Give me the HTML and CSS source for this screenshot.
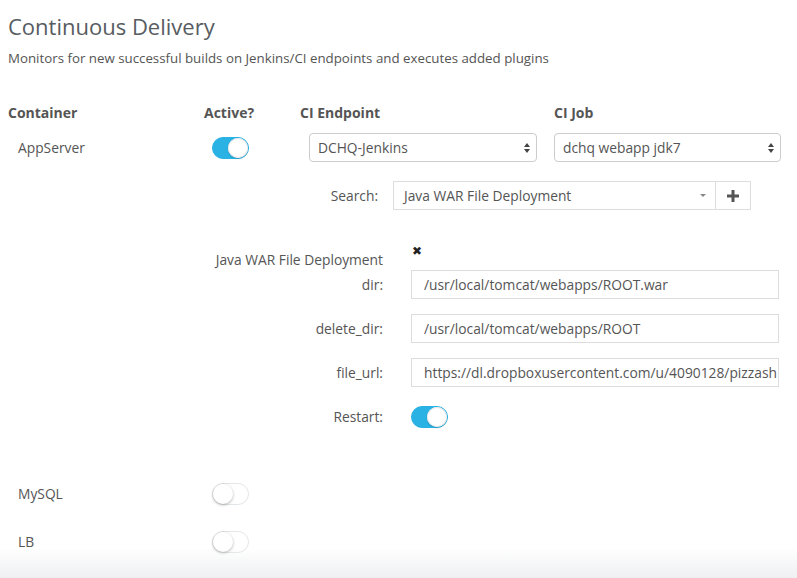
FILE: index.html
```html
<!DOCTYPE html>
<html lang="en">
<head>
    <meta charset="UTF-8">
    <meta name="viewport" content="width=device-width, initial-scale=1.0">
    <title>Continuous Delivery</title>
    <link rel="stylesheet" href="styles.css">
</head>
<body>
    <div class="page">

        <h1 class="title">Continuous Delivery</h1>
        <p class="subtitle">Monitors for new successful builds on Jenkins/CI endpoints and executes added plugins</p>

        <div class="grid headRow">
            <div class="head">Container</div>
            <div class="head">Active?</div>
            <div class="head">CI Endpoint</div>
            <div class="head">CI Job</div>
        </div>

        <div class="grid row">
            <div class="name">AppServer</div>
            <div class="activeCell"><span class="toggle on"></span></div>
            <div class="selectCell">
                <div class="select first">DCHQ-Jenkins<span class="updown"></span></div>
            </div>
            <div class="selectCell">
                <div class="select">dchq webapp jdk7<span class="updown"></span></div>
            </div>
        </div>

        <div class="searchRow">
            <div class="searchLabel">Search:</div>
            <div class="searchGroup">
                <div class="searchBox">Java WAR File Deployment<span class="caret"></span></div>
                <div class="addBtn">
                    <svg width="12" height="12" viewBox="0 0 12 12"><path d="M4.5 0h3v4.5H12v3H7.5V12h-3V7.5H0v-3h4.5z" fill="#555"/></svg>
                </div>
            </div>
        </div>

        <div class="plugin">
            <div class="field pluginHead">
                <div class="label pluginName">Java WAR File Deployment</div>
                <div class="remove">✖</div>
            </div>
            <div class="field">
                <div class="label">dir:</div>
                <div class="input">/usr/local/tomcat/webapps/ROOT.war</div>
            </div>
            <div class="field">
                <div class="label">delete_dir:</div>
                <div class="input">/usr/local/tomcat/webapps/ROOT</div>
            </div>
            <div class="field">
                <div class="label">file_url:</div>
                <div class="input"><span class="clip">https://dl.dropboxusercontent.com/u/4090128/pizzash</span></div>
            </div>
            <div class="field">
                <div class="label">Restart:</div>
                <div class="toggleCell"><span class="toggle on"></span></div>
            </div>
        </div>

        <div class="grid row mysql">
            <div class="name">MySQL</div>
            <div class="activeCell"><span class="toggle"></span></div>
        </div>

        <div class="grid row lb">
            <div class="name">LB</div>
            <div class="activeCell"><span class="toggle"></span></div>
        </div>

    </div>

    <div class="fade"></div>
</body>
</html>
```

FILE: styles.css
```css
* {
    box-sizing: border-box;
}

body {
    margin: 0;
    background-color: #fff;
    font-family: 'Open Sans', 'Liberation Sans', sans-serif;
    color: #555;
    font-size: 13.8px;
}

.page {
    padding: 0 8px;
}

.title {
    margin: 0;
    padding-top: 10px;
    font-size: 22px;
    line-height: 32px;
    font-weight: 400;
    color: #575c62;
}

.subtitle {
    margin: 6px 0 0;
    line-height: 20px;
    font-size: 13.3px;
}

.grid {
    display: grid;
    grid-template-columns: 196px 96px 254px 1fr;
    align-items: center;
}

.headRow {
    margin-top: 35px;
    line-height: 20px;
}

.head {
    font-weight: 700;
    font-size: 14px;
}

.row {
    margin-top: 10px;
    height: 29px;
}

.name {
    padding-left: 10px;
}

.activeCell {
    padding-left: 8px;
    display: flex;
}

.selectCell {
    padding-right: 8px;
}

.select {
    position: relative;
    height: 29px;
    line-height: 27px;
    border: 1px solid #ccc;
    border-radius: 4px;
    padding-left: 8px;
    background-color: #fff;
}

.select.first {
    margin-left: 9px;
    margin-right: 9px;
}

.updown {
    position: absolute;
    right: 6px;
    top: 9px;
    width: 6px;
    height: 10px;
}

.updown:before,
.updown:after {
    content: "";
    position: absolute;
    left: 0;
    border-left: 3px solid transparent;
    border-right: 3px solid transparent;
}

.updown:before {
    top: 0;
    border-bottom: 4px solid #444;
}

.updown:after {
    bottom: 0;
    border-top: 4px solid #444;
}

/* switch */
.toggle {
    position: relative;
    display: inline-block;
    width: 37px;
    height: 22px;
    border-radius: 11px;
    background-color: #fff;
    border: 1px solid #e3e6e8;
}

.toggle:after {
    content: "";
    position: absolute;
    top: 0;
    left: 0;
    width: 20px;
    height: 20px;
    border-radius: 50%;
    background-color: #fff;
    box-shadow: 0 1px 3px rgba(0, 0, 0, 0.3);
}

.toggle.on {
    background-color: #2ab2e4;
    border-color: #2ab2e4;
}

.toggle.on:after {
    left: 15px;
    box-shadow: 0 0 0 1px #e8e8e8 inset, 0 1px 2px rgba(0, 0, 0, 0.15);
}

.searchRow {
    display: flex;
    align-items: center;
    margin-top: 19px;
    height: 29px;
}

.searchLabel {
    width: 370px;
    text-align: right;
}

.searchGroup {
    display: flex;
    margin-left: 15px;
    width: 358px;
    height: 29px;
    border: 1px solid #ddd;
}

.searchBox {
    position: relative;
    flex: 1;
    line-height: 27px;
    padding-left: 10px;
    border-right: 1px solid #ddd;
}

.caret {
    position: absolute;
    right: 9px;
    top: 12px;
    border-left: 3px solid transparent;
    border-right: 3px solid transparent;
    border-top: 3px solid #888;
}

.addBtn {
    width: 34px;
    display: flex;
    align-items: center;
    justify-content: center;
}

.plugin {
    margin-top: 33px;
}

.field {
    display: grid;
    grid-template-columns: 375px 368px;
    column-gap: 28px;
    align-items: center;
    height: 29px;
    margin-top: 15px;
}

.field:first-child {
    margin-top: 0;
}

.label {
    text-align: right;
}

.pluginHead {
    height: 27px;
    align-items: start;
    margin-bottom: -15px;
}

.pluginName {
    padding-top: 8px;
    line-height: 18px;
}

.remove {
    line-height: 16px;
    font-size: 12px;
    color: #222;
    padding-left: 1px;
}

.input {
    height: 29px;
    line-height: 27px;
    border: 1px solid #ddd;
    padding-left: 12px;
    white-space: nowrap;
    overflow: hidden;
}

.toggleCell {
    display: flex;
}

.mysql {
    margin-top: 48px;
}

.lb {
    margin-top: 19px;
}

.fade {
    position: fixed;
    left: 0;
    right: 0;
    bottom: 0;
    height: 30px;
    background: linear-gradient(to bottom, rgba(239, 240, 242, 0), #eff0f2);
}
```
